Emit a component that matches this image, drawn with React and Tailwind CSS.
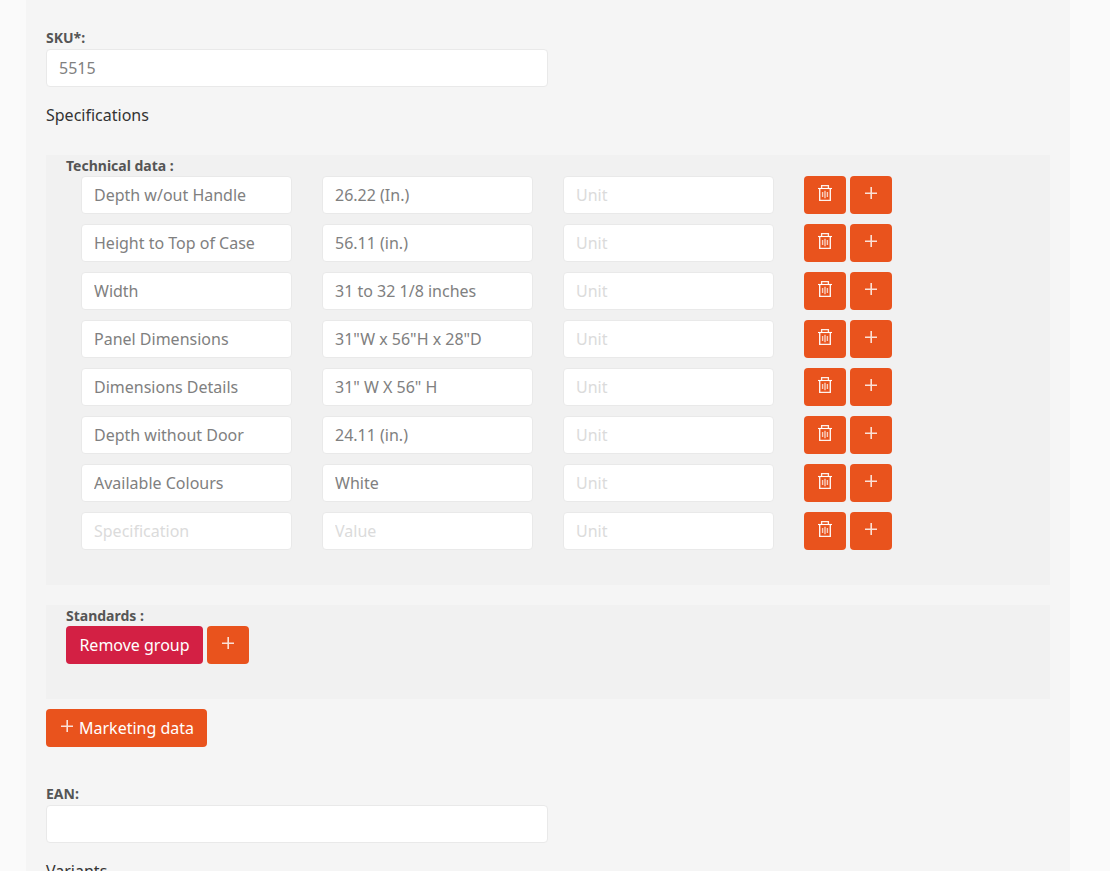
import React from "react";

const specifications = [
  ["Depth w/out Handle", "26.22 (In.)"],
  ["Height to Top of Case", "56.11 (in.)"],
  ["Width", "31 to 32 1/8 inches"],
  ["Panel Dimensions", '31"W x 56"H x 28"D'],
  ["Dimensions Details", '31" W X 56" H'],
  ["Depth without Door", "24.11 (in.)"],
  ["Available Colours", "White"],
  ["", ""],
];

function PlusIcon() {
  return (
    <svg width="14" height="14" viewBox="0 0 14 14" fill="none" stroke="#fff" strokeOpacity="0.82" strokeWidth="1.6" aria-hidden="true">
      <path d="M7.2 1v12M1 7.2h12" />
    </svg>
  );
}

function TrashIcon() {
  return (
    <svg width="14" height="16" viewBox="0 0 14 16" fill="none" stroke="#fff" aria-hidden="true">
      <path d="M0 3.5h14" strokeWidth="1.1" />
      <path d="M3.6 3.5v-2.9h6.8v2.9" strokeWidth="1.3" strokeOpacity="0.9" />
      <path d="M1.7 4v11.4h10.6V4" strokeWidth="1.4" strokeOpacity="0.92" />
      <path d="M4.6 7v5M7 5.8v7.4M9.4 7v5" strokeWidth="1.4" strokeOpacity="0.72" />
    </svg>
  );
}

function TextField({ className, value, placeholder }) {
  return (
    <input
      type="text"
      defaultValue={value}
      placeholder={placeholder}
      className={`h-[38px] shrink-0 rounded border border-[#e9e9e9] bg-white px-3 text-base text-[#808080] outline-none placeholder:text-[#dbdbdb] ${className}`}
    />
  );
}

function IconButton({ children, label }) {
  return (
    <button type="button" aria-label={label} className="flex h-[38px] w-[42px] shrink-0 justify-center rounded bg-[#e9531d]">
      {children}
    </button>
  );
}

function Label({ children }) {
  return <div className="h-[21px] text-sm leading-[21px] font-bold text-[#555]">{children}</div>;
}

export default function App() {
  return (
    <div className="h-[871px] overflow-hidden bg-[#fafafa] pr-10 pl-[26px] font-['Noto_Sans',sans-serif] text-base">
      <div className="flex h-[920px] flex-col bg-[#f5f5f5] px-5 pt-[27px]">
        <Label>SKU*:</Label>
        <TextField className="mt-px w-[502px]" value="5515" />
        <div className="mt-4 h-6 text-[#333]">Specifications</div>

        <section className="mt-7 h-[430px] bg-[#f1f1f1] px-5">
          <Label>Technical data :</Label>
          <div className="flex flex-col gap-2.5 pl-[15px]">
            {specifications.map(([name, value], index) => (
              <div key={index} className="flex">
                <TextField className="mr-[30px] w-[211px]" value={name} placeholder="Specification" />
                <TextField className="mr-[30px] w-[211px]" value={value} placeholder="Value" />
                <TextField className="mr-[30px] w-[211px]" value="" placeholder="Unit" />
                <div className="flex gap-1">
                  <IconButton label="Delete"><span className="pt-[9px]"><TrashIcon /></span></IconButton>
                  <IconButton label="Add"><span className="pt-2.5"><PlusIcon /></span></IconButton>
                </div>
              </div>
            ))}
          </div>
        </section>

        <section className="mt-5 h-[94px] bg-[#f1f1f1] px-5">
          <Label>Standards :</Label>
          <div className="flex gap-1">
            <button type="button" className="h-[38px] w-[137px] rounded bg-[#d32044] whitespace-nowrap text-white">Remove group</button>
            <IconButton label="Add"><span className="pt-2.5"><PlusIcon /></span></IconButton>
          </div>
        </section>

        <button type="button" className="mt-2.5 mb-9 flex h-[38px] w-[161px] shrink-0 items-start rounded bg-[#e9531d] pl-3.5 whitespace-nowrap text-white">
          <span className="pt-2.5"><PlusIcon /></span>
          <span className="pl-[5px] leading-[38px]">Marketing data</span>
        </button>

        <Label>EAN:</Label>
        <TextField className="mt-px w-[502px]" value="" />
        <div className="mt-4 h-6 text-[#333]">Variants</div>
      </div>
    </div>
  );
}
